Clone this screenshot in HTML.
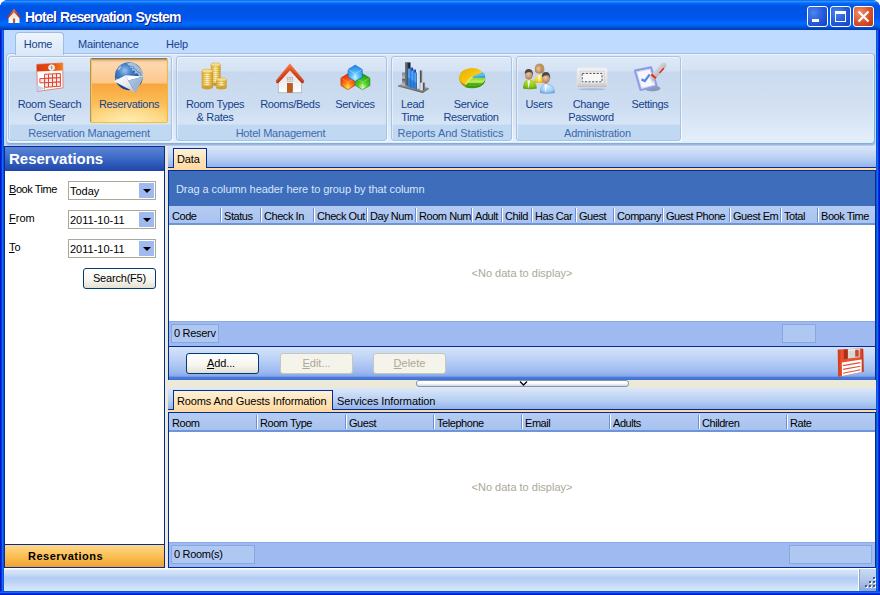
<!DOCTYPE html>
<html>
<head>
<meta charset="utf-8">
<title>Hotel Reservation System</title>
<style>
*{box-sizing:border-box;margin:0;padding:0}
html,body{width:880px;height:595px;overflow:hidden;background:#fff}
body{font-family:"Liberation Sans",sans-serif;font-size:11px;color:#000;position:relative}
.a{position:absolute;white-space:nowrap}
u{text-decoration:underline}
#win{position:absolute;left:0;top:0;width:880px;height:595px;background:linear-gradient(90deg,#0019CF 0,#0019CF 1px,#0831D9 1px,#0831D9 2px,#166AEE 2px,#166AEE 3px,#0855DD 3px,#0855DD 877px,#166AEE 877px,#166AEE 878px,#0831D9 878px,#0831D9 879px,#0019CF 879px);border-radius:8px 8px 0 0;overflow:hidden}
#title{position:absolute;left:0;top:0;width:880px;height:30px;
background:linear-gradient(#0058EE 0%,#3593FF 4%,#288EFF 6%,#127DFF 8%,#036FFC 10%,#0262EE 14%,#0057E5 20%,#0054E3 24%,#0055EB 56%,#005BF5 66%,#026AFE 76%,#0062EF 86%,#0052D6 90%,#0046C6 95%,#0038B4 100%)}
#title .txt{left:25px;top:9px;font-weight:bold;font-size:14px;line-height:16px;color:#fff;text-shadow:1px 1px 0 #0A1883;letter-spacing:-.8px;word-spacing:1px}
.cb{position:absolute;top:6px;width:21px;height:21px;border:1px solid #fff;border-radius:3px;background:radial-gradient(circle at 30% 30%,#4A86F0 0%,#2458D8 55%,#1840C0 100%)}
#client{position:absolute;left:4px;top:30px;width:872px;height:561px;background:#BFDBFF}
/* ribbon */
.rtab{z-index:3;top:3px;height:22px;line-height:22px;font-size:11px;color:#15428B;text-align:center;letter-spacing:-.2px}
#hometab{z-index:2;left:11px;top:2px;width:49px;height:23px;border:1px solid #9DBCE6;border-bottom:none;border-radius:4px 4px 0 0;background:linear-gradient(#EDF4FD,#DBE8F8)}
#ribbon{left:2px;top:23px;width:869px;height:91px;border:1px solid #8DA9D8;border-top-color:#A4C0E6;border-left-color:#A4C0E6;border-radius:4px;background:linear-gradient(#DDE8F6 0,#D5E2F3 16px,#CBDBEF 17px,#D2E0F2 51px,#E5EFFB 89px);box-shadow:inset -1px -1px 0 #D4F4FC,inset 1px 1px 0 #EAF2FB,0 1px 0 #9DB6E0,0 2px 0 #B4CAEE}
.grp{top:2px;height:85px;border:1px solid #A9C3E4;border-radius:3px;background:linear-gradient(#DEE9F8 0,#D4E2F4 14px,#C7D8EE 15px,#CDDDF1 50px,#D6E5F6 67px,#C1D8F2 68px,#C1D8F2 85px);box-shadow:1px 1px 0 rgba(255,255,255,.6),inset 1px 1px 0 rgba(255,255,255,.45)}
.glab{left:0;right:0;bottom:0;height:15px;line-height:16px;text-align:center;color:#3E6AAA;font-size:11px;letter-spacing:-.2px;padding-right:2px}
.btn{top:1px;height:65px;text-align:center;color:#15428B;line-height:13px;font-size:11px;letter-spacing:-.33px}
.btn .t{left:-20px;right:-20px;top:40px;text-align:center;white-space:pre}
.btn.sel .t{top:39px}
.btn.sel{border:1px solid;border-color:#8B7654 #F2B840 #F8C030 #A8946C;border-radius:2px;background:radial-gradient(ellipse 60% 40% at 50% 100%,rgba(255,240,180,.9),rgba(255,240,180,0)),linear-gradient(#FBCB98 0,#FDD8AE 5px,#FCC78C 24px,#F9A53C 25px,#FBBF58 45px,#FDD680 63px);box-shadow:inset 1px 0 0 #F8C850,inset 0 2px 2px -1px rgba(110,80,30,.55)}
/* left panel */
#left{left:0;top:116px;width:161px;height:422px;border:1px solid #002D96;background:#fff}
#lhead{left:0;top:0;width:159px;height:24px;background:linear-gradient(#5B85D6 0,#3A68C4 50%,#1F45A8 100%);color:#fff;font-weight:bold;font-size:15px;line-height:24px;padding-left:4px}
.combo{left:63px;width:88px;height:19px;border:1px solid #ACA899;background:#fff;line-height:19px;padding-left:1px;font-size:11px}
.combo i{position:absolute;right:1px;top:1px;width:15px;height:15px;background:#9EBAF0}
.combo i:after{content:"";position:absolute;left:4px;top:6px;border:4px solid transparent;border-top:4px solid #000;border-bottom:none}
.xpbtn{height:21px;border:1px solid #003C74;border-radius:3px;background:linear-gradient(#fff 0,#F6F5EE 60%,#E3E0D2 100%);text-align:center;line-height:19px;font-size:11px}
.xpbtn.dis{border-color:#C9C7BA;background:#F5F4EA;color:#ACA899}
#navbtn{left:0;top:397px;width:159px;height:23px;border-top:1px solid #002D96;background:linear-gradient(#FFD88A 0,#FBBF55 50%,#EFA22F 100%);font-weight:bold;text-align:left;padding-left:23px;line-height:22px;font-size:11px;letter-spacing:.5px}
/* right */
#split{left:161px;top:116px;width:3px;height:422px;background:#ECE9D8}
#right{left:164px;top:116px;width:708px;height:422px;background:#ECE9D8}
.tabstrip{left:0;width:708px;background:linear-gradient(#DCE8FA 0,#B5CDF3 60%,#8FB0EA 100%)}
.tab{border:1px solid #002D96;border-bottom:none;background:linear-gradient(#FFF1D6,#FFD9A0);line-height:21px;text-align:left;padding-left:3px;font-size:11px;letter-spacing:-.12px}
.hdr{background:linear-gradient(#B4CCF2,#A9C3EF);border-bottom:2px solid #6E94DC}
.hdr span{position:absolute;top:0;height:17px;line-height:20px;padding-left:3px;font-size:11px;overflow:hidden;white-space:nowrap;letter-spacing:-.45px}
.hdr span.s{margin-left:-1px;padding-left:4px;background:linear-gradient(#6A8FD8,#6A8FD8) 0 2px/1px 14px no-repeat,linear-gradient(#fff,#fff) 1px 2px/1px 14px no-repeat}
.foot{background:#9EBAF0;border-top:1px solid #8AA9E6}
.fcell{border:1px solid #8AA6E0;background:#AFC8F2;line-height:17px;padding-left:2px;font-size:11px;letter-spacing:-.3px}
.nodata{color:#ACA899;font-size:11px;text-align:center;left:0;right:0}
#status{left:0;top:538px;width:872px;height:23px;background:linear-gradient(#fff 0,#fff 1px,#D7E5FA 2px,#CBDDF8 6px,#B1CCF5 10px,#BCD3F6 14px,#CDDEF9 18px,#D9E7FB 23px)}
</style>
</head>
<body>
<div id="win">
  <div id="title"><div class="a txt">Hotel Reservation System</div>
    <div class="cb" style="left:807px"><div class="a" style="left:4px;top:12px;width:7px;height:3px;background:#fff"></div></div>
    <div class="cb" style="left:830px"><div class="a" style="left:4px;top:4px;width:11px;height:11px;border:1px solid #fff;border-top-width:3px"></div></div>
    <div class="cb" style="left:853px;background:radial-gradient(circle at 30% 30%,#F0906A 0%,#D8502A 55%,#B83010 100%)"><svg class="a" style="left:3px;top:3px" width="13" height="13" viewBox="0 0 13 13"><path d="M1.5 1.5L11.5 11.5M11.5 1.5L1.5 11.5" stroke="#fff" stroke-width="2.2"/></svg></div>
  </div>
  <div id="client">
    <!-- ribbon tabs -->
    <div class="a" id="hometab"></div>
    <div class="a rtab" style="left:10px;width:48px">Home</div>
    <div class="a rtab" style="left:74px">Maintenance</div>
    <div class="a rtab" style="left:162px">Help</div>
    <div class="a" id="ribbon">
      <div class="a grp" style="left:1px;width:164px">
        <div class="a btn" style="left:2px;width:77px"><div class="a t">Room Search
Center</div></div>
        <div class="a btn sel" style="left:81px;top:1px;width:78px;height:65px"><div class="a t">Reservations</div></div>
        <div class="a glab">Reservation Management</div>
      </div>
      <div class="a grp" style="left:169px;width:211px">
        <div class="a btn" style="left:3px;width:70px"><div class="a t">Room Types
&amp; Rates</div></div>
        <div class="a btn" style="left:78px;width:70px"><div class="a t">Rooms/Beds</div></div>
        <div class="a btn" style="left:152px;width:52px"><div class="a t">Services</div></div>
        <div class="a glab">Hotel Management</div>
      </div>
      <div class="a grp" style="left:384px;width:121px">
        <div class="a btn" style="left:3px;width:35px"><div class="a t">Lead
Time</div></div>
        <div class="a btn" style="left:44px;width:70px"><div class="a t">Service
Reservation</div></div>
        <div class="a glab" style="letter-spacing:-.08px">Reports And Statistics</div>
      </div>
      <div class="a grp" style="left:509px;width:165px">
        <div class="a btn" style="left:2px;width:40px"><div class="a t">Users</div></div>
        <div class="a btn" style="left:48px;width:52px"><div class="a t">Change
Password</div></div>
        <div class="a btn" style="left:108px;width:50px"><div class="a t">Settings</div></div>
        <div class="a glab">Administration</div>
      </div>
    </div>
    <!-- left panel -->
    <div class="a" id="left">
      <div class="a" id="lhead">Reservations</div>
      <div class="a" style="left:4px;top:36px;line-height:13px;letter-spacing:-.45px"><u>B</u>ook Time</div>
      <div class="a combo" style="top:34px">Today<i></i></div>
      <div class="a" style="left:4px;top:65px;line-height:13px"><u>F</u>rom</div>
      <div class="a combo" style="top:63px">2011-10-11<i></i></div>
      <div class="a" style="left:4px;top:94px;line-height:13px"><u>T</u>o</div>
      <div class="a combo" style="top:92px">2011-10-11<i></i></div>
      <div class="a xpbtn" style="left:78px;top:121px;width:73px;height:21px;line-height:19px;letter-spacing:-.2px">Search(F5)</div>
      <div class="a" id="navbtn">Reservations</div>
    </div>
    <div class="a" id="split"></div>
    <!-- right panel -->
    <div class="a" id="right">
      <!-- top tab strip -->
      <div class="a tabstrip" style="top:0;height:22px"></div>
      <div class="a" style="left:0;top:21px;width:708px;height:1px;background:#002D96"></div>
      <div class="a tab" style="left:5px;top:2px;width:34px;height:21px">Data</div>
      <div class="a" style="left:0;top:22px;width:708px;height:2px;background:#FFD9A0"></div>
      <!-- grid 1 -->
      <div class="a" style="left:0;top:24px;width:708px;height:177px;border:1px solid #002D96;background:#fff">
        <div class="a" style="left:0;top:0;width:706px;height:35px;background:#3D6DBB;color:#D9E6FA;line-height:37px;padding-left:7px;font-size:11px;letter-spacing:-.07px">Drag a column header here to group by that column</div>
        <div class="a hdr" style="left:0;top:35px;width:706px;height:19px">
          <span style="left:0;width:52px">Code</span>
          <span class="s" style="left:52px;width:41px">Status</span>
          <span class="s" style="left:92px;width:54px">Check In</span>
          <span class="s" style="left:145px;width:54px">Check Out</span>
          <span class="s" style="left:198px;width:50px">Day Num</span>
          <span class="s" style="left:247px;width:57px">Room Num</span>
          <span class="s" style="left:303px;width:31px">Adult</span>
          <span class="s" style="left:333px;width:31px">Child</span>
          <span class="s" style="left:363px;width:45px">Has Car</span>
          <span class="s" style="left:407px;width:39px">Guest</span>
          <span class="s" style="left:445px;width:50px">Company</span>
          <span class="s" style="left:494px;width:68px">Guest Phone</span>
          <span class="s" style="left:561px;width:52px">Guest Em</span>
          <span class="s" style="left:612px;width:38px">Total</span>
          <span class="s" style="left:649px;width:58px">Book Time</span>
        </div>
        <div class="a nodata" style="top:96px">&lt;No data to display&gt;</div>
        <div class="a foot" style="left:0;top:150px;width:706px;height:25px">
          <div class="a fcell" style="left:2px;top:2px;width:48px;height:19px">0 Reserv</div>
          <div class="a fcell" style="left:613px;top:2px;width:34px;height:19px"></div>
        </div>
      </div>
      <!-- button bar -->
      <div class="a" style="left:0;top:201px;width:708px;height:33px;border-left:1px solid #002D96;border-right:1px solid #002D96;background:linear-gradient(#D6E4FA 0,#B9CFF5 40%,#9DBAF0 75%,#86A8EA 88%,#4D7BD8 92%,#3F6FD3 100%)">
        <div class="a xpbtn" style="left:17px;top:6px;width:73px;padding-right:3px;letter-spacing:-.1px"><u>A</u>dd...</div>
        <div class="a xpbtn dis" style="left:111px;top:6px;width:73px"><u>E</u>dit...</div>
        <div class="a xpbtn dis" style="left:204px;top:6px;width:73px"><u>D</u>elete</div>
        <div class="a" id="i-floppy" style="left:668px;top:1px;width:29px;height:30px"></div>
      </div>
      <!-- splitter grip -->
      <div class="a" style="left:248px;top:234px;width:213px;height:7px;border:1px solid #8494B4;border-radius:3px;background:linear-gradient(#fff 0,#fff 40%,#C8D8F0 100%)"></div>
      <svg class="a" style="left:351px;top:235px" width="9" height="5" viewBox="0 0 9 5"><path d="M1 .5L4.5 4L8 .5" fill="none" stroke="#000" stroke-width="1.3"/></svg>
      <!-- bottom tab strip -->
      <div class="a tabstrip" style="top:242px;height:22px"></div>
      <div class="a" style="left:0;top:263px;width:708px;height:1px;background:#002D96"></div>
      <div class="a tab" style="left:5px;top:244px;width:160px;height:21px">Rooms And Guests Information</div>
      <div class="a" style="left:169px;top:246px;line-height:19px;height:19px;letter-spacing:-.1px">Services Information</div>
      <div class="a" style="left:0;top:264px;width:708px;height:2px;background:#FFD9A0"></div>
      <!-- grid 2 -->
      <div class="a" style="left:0;top:266px;width:708px;height:156px;border:1px solid #002D96;background:#fff">
        <div class="a hdr" style="left:0;top:0;width:706px;height:19px">
          <span style="left:0;width:87px">Room</span>
          <span class="s" style="left:88px;width:89px">Room Type</span>
          <span class="s" style="left:177px;width:88px">Guest</span>
          <span class="s" style="left:265px;width:88px">Telephone</span>
          <span class="s" style="left:353px;width:89px">Email</span>
          <span class="s" style="left:441px;width:89px">Adults</span>
          <span class="s" style="left:530px;width:88px">Children</span>
          <span class="s" style="left:618px;width:89px">Rate</span>
        </div>
        <div class="a nodata" style="top:68px">&lt;No data to display&gt;</div>
        <div class="a foot" style="left:0;top:129px;width:706px;height:25px">
          <div class="a fcell" style="left:2px;top:2px;width:84px;height:19px">0 Room(s)</div>
          <div class="a fcell" style="left:620px;top:2px;width:83px;height:19px"></div>
        </div>
      </div>
    </div>
    <!-- status bar -->
    <div class="a" id="status">
      <div class="a" style="left:854px;top:1px;width:1px;height:22px;background:#fff"></div>
      <div class="a" style="left:855px;top:1px;width:17px;height:22px;border-left:1px solid #8FA5CE;background:linear-gradient(#C9DAF6 0,#B4C9EC 45%,#8FA8D4 100%)"></div>
      <svg class="a" style="left:860px;top:8px" width="12" height="12" viewBox="0 0 12 12"><g fill="#fff"><rect x="10" y="2" width="2" height="2"/><rect x="6" y="6" width="2" height="2"/><rect x="10" y="6" width="2" height="2"/><rect x="2" y="10" width="2" height="2"/><rect x="6" y="10" width="2" height="2"/><rect x="10" y="10" width="2" height="2"/></g><g fill="#44588E"><rect x="9" y="1" width="2" height="2"/><rect x="5" y="5" width="2" height="2"/><rect x="9" y="5" width="2" height="2"/><rect x="1" y="9" width="2" height="2"/><rect x="5" y="9" width="2" height="2"/><rect x="9" y="9" width="2" height="2"/></g></svg>
    </div>
  </div>
<div class="a" style="left:0;top:591px;width:880px;height:4px;background:linear-gradient(#0855DD 0,#0855DD 1px,#166AEE 1px,#166AEE 2px,#0831D9 2px,#0831D9 3px,#0019CF 3px)"></div>
<!-- ICONS -->
<svg class="a" id="icons" style="left:0;top:0;pointer-events:none" width="880" height="595" viewBox="0 0 880 595">
<defs>
<linearGradient id="gRoof" x1="0" y1="0" x2="0" y2="1"><stop offset="0" stop-color="#F4793A"/><stop offset=".5" stop-color="#D9401A"/><stop offset="1" stop-color="#B02A10"/></linearGradient>
<linearGradient id="gWall" x1="0" y1="0" x2="0" y2="1"><stop offset="0" stop-color="#DCDCDC"/><stop offset=".7" stop-color="#F4F4F4"/><stop offset="1" stop-color="#FFFFFF"/></linearGradient>
<linearGradient id="gCalTop" x1="0" y1="0" x2="1" y2="0"><stop offset="0" stop-color="#D83A14"/><stop offset=".6" stop-color="#E84A12"/><stop offset="1" stop-color="#F08018"/></linearGradient>
<radialGradient id="gGlobe" cx=".35" cy=".3" r=".75"><stop offset="0" stop-color="#9CC4EC"/><stop offset=".3" stop-color="#4480C8"/><stop offset=".7" stop-color="#1F549C"/><stop offset="1" stop-color="#123470"/></radialGradient>
<linearGradient id="gEnvL" x1="0" y1="0" x2="1" y2="1"><stop offset="0" stop-color="#FFFFFF"/><stop offset=".6" stop-color="#E4E8EE"/><stop offset="1" stop-color="#A8B4C4"/></linearGradient>
<linearGradient id="gEnvR" x1="0" y1="0" x2="1" y2="1"><stop offset="0" stop-color="#B4CAE2"/><stop offset="1" stop-color="#86A6C8"/></linearGradient>
<linearGradient id="gCoin" x1="0" y1="0" x2="1" y2="0"><stop offset="0" stop-color="#D0A436"/><stop offset=".25" stop-color="#F0D070"/><stop offset=".5" stop-color="#FFF8C8"/><stop offset=".75" stop-color="#ECC658"/><stop offset="1" stop-color="#C49830"/></linearGradient>
<pattern id="pCoin" x="0" y="0" width="4" height="2" patternUnits="userSpaceOnUse"><rect x="0" y="1.2" width="4" height=".8" fill="#C8962C" opacity=".5"/></pattern>
<radialGradient id="gBlue" cx=".5" cy=".75" r=".8"><stop offset="0" stop-color="#C8F4FF"/><stop offset=".35" stop-color="#58C0FC"/><stop offset="1" stop-color="#1878E8"/></radialGradient>
<radialGradient id="gRed" cx=".5" cy=".85" r=".8"><stop offset="0" stop-color="#FFE030"/><stop offset=".4" stop-color="#FC7C10"/><stop offset="1" stop-color="#F02808"/></radialGradient>
<radialGradient id="gGreen" cx=".5" cy=".85" r=".8"><stop offset="0" stop-color="#D0FFB0"/><stop offset=".4" stop-color="#58D028"/><stop offset="1" stop-color="#18A008"/></radialGradient>
<linearGradient id="gBarB" x1="0" y1="0" x2="0" y2="1"><stop offset="0" stop-color="#2E86E8"/><stop offset=".5" stop-color="#5AA8F4"/><stop offset=".55" stop-color="#2C78D4"/><stop offset="1" stop-color="#3C90E4"/></linearGradient>
<linearGradient id="gBarBh" x1="0" y1="0" x2="1" y2="0"><stop offset="0" stop-color="#2470D0"/><stop offset=".3" stop-color="#64B4FC"/><stop offset=".7" stop-color="#3C90EC"/><stop offset="1" stop-color="#1C5CC0"/></linearGradient>
<linearGradient id="gBarG" x1="0" y1="0" x2="0" y2="1"><stop offset="0" stop-color="#7C848C"/><stop offset=".45" stop-color="#B4BAC0"/><stop offset=".5" stop-color="#50585E"/><stop offset="1" stop-color="#C8CCD0"/></linearGradient>
<linearGradient id="gBarD" x1="0" y1="0" x2="1" y2="0"><stop offset="0" stop-color="#68727C"/><stop offset=".5" stop-color="#2C343C"/><stop offset="1" stop-color="#10161C"/></linearGradient>
<linearGradient id="gBarS" x1="0" y1="0" x2="1" y2="0"><stop offset="0" stop-color="#F4F6F8"/><stop offset=".5" stop-color="#C4CAD0"/><stop offset=".6" stop-color="#40484E"/><stop offset="1" stop-color="#8C949C"/></linearGradient>
<linearGradient id="gPieY" x1="0" y1="0" x2="1" y2="1"><stop offset="0" stop-color="#E8A808"/><stop offset=".6" stop-color="#F8CC10"/><stop offset="1" stop-color="#FFF020"/></linearGradient>
<linearGradient id="gPieG" x1="0" y1="0" x2="0" y2="1"><stop offset="0" stop-color="#88D818"/><stop offset=".55" stop-color="#C4F070"/><stop offset=".7" stop-color="#58B808"/><stop offset="1" stop-color="#3C9808"/></linearGradient>
<radialGradient id="gSkin" cx=".45" cy=".4" r=".7"><stop offset="0" stop-color="#F0C4A0"/><stop offset=".6" stop-color="#C89470"/><stop offset="1" stop-color="#8C5C40"/></radialGradient>
<radialGradient id="gBodyG" cx=".5" cy=".3" r=".8"><stop offset="0" stop-color="#B8E030"/><stop offset=".6" stop-color="#88C418"/><stop offset="1" stop-color="#4C9008"/></radialGradient>
<radialGradient id="gBodyB" cx=".5" cy=".3" r=".8"><stop offset="0" stop-color="#D0ECFF"/><stop offset=".6" stop-color="#A0D0FC"/><stop offset="1" stop-color="#6898D8"/></radialGradient>
<radialGradient id="gBodyY" cx=".5" cy=".3" r=".8"><stop offset="0" stop-color="#FFF060"/><stop offset=".6" stop-color="#FCD418"/><stop offset="1" stop-color="#D8A008"/></radialGradient>
<linearGradient id="gPwd" x1="0" y1="0" x2="0" y2="1"><stop offset="0" stop-color="#F4F4F4"/><stop offset=".8" stop-color="#DCDCDC"/><stop offset="1" stop-color="#B8B8B8"/></linearGradient>
<linearGradient id="gPen" x1="0" y1="0" x2="1" y2="1"><stop offset="0" stop-color="#F8F8F8"/><stop offset=".5" stop-color="#C8C8C8"/><stop offset="1" stop-color="#707070"/></linearGradient>
<linearGradient id="gFlop" x1="0" y1="0" x2="1" y2="0"><stop offset="0" stop-color="#C83818"/><stop offset=".15" stop-color="#E85030"/><stop offset=".85" stop-color="#E85030"/><stop offset="1" stop-color="#C03010"/></linearGradient>
</defs>

<!-- title house -->
<g>
<path d="M8.5 17.5 L14 11.5 L19.5 17.5 L19.5 23 L8.5 23Z" fill="url(#gWall)"/>
<rect x="12.9" y="18.5" width="2.2" height="4.5" fill="#C85A18"/>
<path d="M13.9 8.8 L21 17.6 L19.8 18.6 L13.9 12 L8 18.6 L6.8 17.6Z" fill="url(#gRoof)"/>
</g>

<!-- calendar -->
<g>
<path d="M36.8 64.4 L62.7 63 L63 87.8 L37.4 91.4Z" fill="#fff" stroke="#D8442A" stroke-width=".6"/>
<path d="M36.8 64.4 L62.7 63 L62.7 70.4 L36.9 71.6Z" fill="url(#gCalTop)"/>
<path d="M37.2 85 L44.8 88.4 L37.4 91Z" fill="#BCD8F4"/><path d="M44.4 86.2v3.4" stroke="#9C9C9C" stroke-width=".8"/>
<ellipse cx="51.6" cy="67.6" rx="3" ry="2.8" fill="#E8E8E8" stroke="#fff" stroke-width=".8"/>
<ellipse cx="51.6" cy="67.6" rx=".8" ry="2" fill="#9C9C9C"/>
<g fill="#FFECE8" stroke="#E04434" stroke-width="1">
<path d="M44.6 74.2h3.9v4.2h-3.9zM48.5 74h4v4.2h-4zM52.5 73.8h4v4.2h-4zM56.5 73.6h3.9v4.2h-3.9z"/>
<path d="M39.9 78.6h4.7v4.2h-4.7zM44.6 78.4h3.9v4.3h-3.9zM48.5 78.2h4v4.3h-4zM52.5 78h4v4.3h-4zM56.5 77.8h3.9v4.3h-3.9z"/>
<path d="M44.6 82.7h3.9v4.5h-3.9zM48.5 82.5h4v4.4h-4zM52.5 82.3h4v4.3h-4zM56.5 82.1h3.9v4.2h-3.9z"/>
</g>
</g>

<!-- globe + envelope -->
<g>
<circle cx="128.9" cy="76.2" r="14" fill="url(#gGlobe)"/>
<path d="M127 63.4 q4 -1.6 8 .4 q5 3 7 7 q2 4 .7 8 l-2 -3 l-1.4 1 l-2 -3.5 l-3 .5 l1 -3 l-4 -.5 l1.5 -2 l-3.5 -1 l2 -1.4 l-3 -.6z" fill="#DCE4EC" opacity=".7"/><path d="M131 66 l3 1 l-1 1.6 l3 .6 l1 2.4 l3 1 l1 3" stroke="#3C7CC4" stroke-width="1" fill="none" opacity=".6"/>
<path d="M117.5 69 q2 -3 4 -3.5 l-1 3 l-2 2z M116 78 l2 1 l0 2 l-1.5 0z" fill="#D8E0EA" opacity=".7"/>
<path d="M125.5 75.2 L143.9 76.4 L128.2 80.4Z" fill="#FFFFFF"/>
<path d="M114 81.2 L125.5 75.2 L128.2 80.4 L135.6 92.8Z" fill="url(#gEnvL)"/>
<path d="M128.2 80.4 L143.9 76.4 L135.6 92.8Z" fill="url(#gEnvR)"/>
</g>

<!-- coins -->
<g>
<rect x="210.8" y="64.6" width="9.8" height="19.6" fill="url(#gCoin)"/><rect x="210.8" y="64.6" width="9.8" height="19.6" fill="url(#pCoin)"/>
<ellipse cx="215.7" cy="84.2" rx="4.9" ry="1.6" fill="#C8982C"/>
<ellipse cx="215.7" cy="64.6" rx="4.9" ry="1.7" fill="#F8E080" stroke="#D0A030" stroke-width=".5"/>
<rect x="201.7" y="71" width="11.2" height="16.6" fill="url(#gCoin)"/><rect x="201.7" y="71" width="11.2" height="16.6" fill="url(#pCoin)"/>
<ellipse cx="207.3" cy="87.6" rx="5.6" ry="1.8" fill="#D0A030"/>
<ellipse cx="207.3" cy="71" rx="5.6" ry="1.8" fill="#F8E080" stroke="#D0A030" stroke-width=".5"/>
<rect x="216.2" y="79.6" width="10.4" height="8.2" fill="url(#gCoin)"/><rect x="216.2" y="79.6" width="10.4" height="8.2" fill="url(#pCoin)"/>
<ellipse cx="221.4" cy="87.8" rx="5.2" ry="1.7" fill="#D0A030"/>
<ellipse cx="221.4" cy="79.6" rx="5.2" ry="1.7" fill="#F8E080" stroke="#D0A030" stroke-width=".5"/>
</g>

<!-- house -->
<g>
<path d="M278.4 82 L289.9 69 L301.6 82 L301.6 92.6 L278.4 92.6Z" fill="url(#gWall)" stroke="#8C9098" stroke-width=".5"/>
<rect x="287.2" y="77.2" width="5.6" height="4" fill="#E8E8E8" stroke="#A0A0A0" stroke-width=".5"/>
<path d="M290 77.2v4M287.2 79.2h5.6" stroke="#A0A0A0" stroke-width=".5"/>
<rect x="287.2" y="83.2" width="5.4" height="9.2" fill="#C05A18" stroke="#8C3C0C" stroke-width=".4"/>
<path d="M289.9 63.4 L304.2 80.8 L303.6 83 L301.8 83.2 L289.9 70.6 L278.2 83.2 L276.4 83 L275.8 80.8Z" fill="url(#gRoof)"/>
<path d="M289.9 63.4 L304.2 80.8 L303.6 83 L289.9 66.4 L276.4 83 L275.8 80.8Z" fill="#F88850" opacity=".35"/>
</g>

<!-- cubes -->
<g stroke-width=".5">
<path d="M347.8 73.8 L354.9 78.1 L354.9 85.6 L347.8 89.7 L340.9 85.6 L340.9 78Z" fill="url(#gRed)" stroke="#A02808"/>
<path d="M340.9 78 L347.9 82.2 L354.9 78.1 M347.9 82.2 L347.8 89.7" stroke="#FFD0A0" fill="none" opacity=".7"/>
<path d="M362.6 73.8 L369.9 78 L369.9 85.6 L362.6 89.7 L355.5 85.6 L355.5 78.1Z" fill="url(#gGreen)" stroke="#107008"/>
<path d="M355.5 78.1 L362.6 82.2 L369.9 78 M362.6 82.2 L362.6 89.7" stroke="#D0FFC0" fill="none" opacity=".7"/>
<path d="M355.2 65.1 L362.3 69.4 L362.3 77.2 L355.2 81.3 L348.1 77.2 L348.1 69.4Z" fill="url(#gBlue)" stroke="#1058B8"/>
<path d="M348.1 69.4 L355.2 73.8 L362.3 69.4 M355.2 73.8 L355.2 81.3" stroke="#E0F8FF" fill="none" opacity=".8"/>
</g>

<!-- bars -->
<g>
<path d="M398 85.4 L404 83.6 L428.8 88 L422.8 93Z" fill="#8C8C88"/>
<path d="M398 85.4 L422.8 91.6 L428.8 88 L428.8 89 L422.8 93 L398 86.4Z" fill="#6C6C68"/>
<rect x="402.1" y="72.5" width="5.4" height="13" fill="url(#gBarG)"/>
<rect x="405.1" y="62.4" width="5.4" height="23" fill="url(#gBarD)"/>
<rect x="405.1" y="62.4" width="2.6" height="23" fill="#6C747C" opacity=".6"/>
<rect x="417.2" y="70.4" width="5" height="18.4" fill="url(#gBarS)"/>
<rect x="420.3" y="82.6" width="4.8" height="7.6" fill="url(#gBarS)"/>
<path d="M407.8 68.4 L411.2 68.4 L411.2 87.6 L407.8 87.2Z" fill="url(#gBarBh)"/>
<path d="M411.2 68.4 L412.9 67.4 L412.9 71 L411.2 71Z" fill="#0C2C88"/>
<path d="M407.8 68.4 L409.4 67.4 L412.9 67.4 L411.2 68.4Z" fill="#1C50B8"/>
<path d="M411 70.4 L414.3 70.4 L414.3 88.4 L411 88Z" fill="url(#gBarBh)"/>
<path d="M414.3 70.4 L415.9 69.4 L415.9 73 L414.3 73Z" fill="#0C2C88"/>
<path d="M411 70.4 L412.6 69.4 L415.9 69.4 L414.3 70.4Z" fill="#1C50B8"/>
<path d="M414 72.4 L417 72.4 L417 89.4 L414 88.8Z" fill="url(#gBarBh)"/>
<path d="M407.8 78 L411.2 79 L411.2 87.6 L407.8 87.2Z M411 80 L414.3 81 L414.3 88.4 L411 88Z M414 82 L417 83 L417 89.4 L414 88.8Z" fill="#1458B8" opacity=".45"/>
</g>

<!-- pie -->
<g>
<path d="M465.2 84.6 Q472 87 480 84.4 Q485.2 82 485.2 77.6 L485.2 80.6 Q484.8 84.6 479.6 87 Q472 89.6 465.2 87.2Z" fill="#3C9A08"/>
<path d="M465.2 84.6 L471.4 78.2 L485.2 77.8 Q485.2 82 480 84.4 Q472 87 465.2 84.6Z" fill="url(#gPieG)"/>
<path d="M472.4 76.6 L482.4 72.4 Q485.4 74 485.2 77.8 L472.4 77.8Z" fill="#2C98D4"/>
<path d="M472.4 76.4 L482.4 72.2 Q484.8 73.4 485.2 75.8 L472.4 77Z" fill="#58C0F0"/>
<path d="M458.9 76 Q458.4 82.6 464.8 86.8 L466 84 Q460 81 458.9 76Z" fill="#C08404"/>
<path d="M465.2 84.6 Q458.6 81.4 459 76.4 Q460.6 69 471 67.9 Q479 67.6 482.4 72.2 L472.4 76.4 Q468 79 465.2 84.6Z" fill="url(#gPieY)"/>
<path d="M472.4 76.4 Q468 79 465.2 84.6 L466.4 85 Q469 80 473.4 77Z" fill="#FFF040" opacity=".8"/>
</g>

<!-- users -->
<g>
<path d="M534.2 82.8 Q534 76 539.2 74.4 Q544.4 76 544.2 82.8Z" fill="url(#gBodyY)"/>
<path d="M538 75.4 L539.2 82.8 L540.6 75.4Z" fill="#F4F4F4"/>
<path d="M534.8 69.4 Q534.6 63.4 539.6 63.4 Q544.8 63.8 544.4 70 Q544.4 73 542.6 73.6 L536 72.6 Q534.8 71.6 534.8 69.4Z" fill="#B89850"/>
<ellipse cx="538.8" cy="69.6" rx="3.4" ry="4" fill="url(#gSkin)"/>
<path d="M523 88.4 Q522.8 80.8 528.8 79.4 Q537 80.8 536.8 88.4 Q530 90 523 88.4Z" fill="url(#gBodyG)"/>
<path d="M527.4 80.2 L528.4 88.8 L530.2 80.2Z" fill="#F4F4F4"/>
<ellipse cx="528.8" cy="75" rx="3.9" ry="4.6" fill="url(#gSkin)"/>
<path d="M524.8 74 Q524.4 69 529 69 Q533.4 69.2 533 75.4 L531.6 72.4 Q528 71 524.8 74Z" fill="#484848"/>
<path d="M540.2 92.8 Q540 85 546 83.4 Q554.8 85 554.6 92.8 Q547 94.2 540.2 92.8Z" fill="url(#gBodyB)" stroke="#5888C8" stroke-width=".4"/>
<path d="M544.4 84.4 L545.4 93.2 L547.2 84.4Z" fill="#F8F8F8"/>
<ellipse cx="545.8" cy="78.6" rx="4" ry="4.8" fill="url(#gSkin)"/>
<path d="M541.8 77.4 Q541.6 72 546.4 72 Q550.6 72.4 550.2 79 L548.8 75.6 Q545 74.2 541.8 77.4Z" fill="#484848"/>
</g>

<!-- password -->
<g>
<ellipse cx="592" cy="89.2" rx="13.5" ry="1" fill="#8CA4C8" opacity=".6"/>
<rect x="577.1" y="67.8" width="30" height="19.8" rx="1" fill="url(#gPwd)" stroke="#E8E8E8" stroke-width=".5"/>
<rect x="580.1" y="71.1" width="24" height="12.8" fill="#F0F0F0" stroke="#C4C4C4" stroke-width=".6"/>
<rect x="582.2" y="73.4" width="19.8" height="8.4" fill="#F8F8F8" stroke="#505050" stroke-width="1" stroke-dasharray="2.2 1.4"/>
</g>

<!-- settings -->
<g>
<ellipse cx="652.5" cy="88.6" rx="8" ry="2.8" fill="#3C4C70" opacity=".45"/>
<path d="M635 70.6 L651 67.4 L656.6 85.8 L640.6 90Z" fill="#F8F8FC" stroke="#8E9CE8" stroke-width="2.2" stroke-linejoin="round"/>
<path d="M636.6 71.8 L650 69.2 L655 85 L641.6 88.4Z" fill="none" stroke="#C4CCF4" stroke-width=".8"/>
<path d="M641.4 79.4 L644.8 81 L649.8 74.4" fill="none" stroke="#5C88E8" stroke-width="2.3"/>
<path d="M650 78.6 L652.4 83.6 L654.6 82.4 L653.8 79.2Z" fill="#D8D8D8"/>
<path d="M649.4 77.2 L661 63.8 Q664 61.6 665.8 63.6 Q667 65.6 665.2 67.8 L653.4 81Z" fill="url(#gPen)"/>
<path d="M652 73.6 L656.6 77.4 L655.2 79 L650.6 75.2Z" fill="#E82C20"/>
<path d="M659 72.4 L663.4 67.6 L664.2 69 L660 73.4Z" fill="#E82C20"/>
</g>

<!-- floppy -->
<g>
<path d="M837.7 350.4 Q837.7 349.6 838.6 349.5 L862.4 348.6 Q863.3 348.6 863.3 349.5 L863.8 371.8 L838.9 376.8 Q838.2 376.8 838.2 376Z" fill="url(#gFlop)"/>
<path d="M843.8 349.6 L848 349.5 L848 358.4 L843.8 359.2Z" fill="#A83018"/>
<path d="M847.9 349.5 L859.7 349.1 L859.7 357.2 L847.9 358.4Z" fill="#D8D8D4"/>
<path d="M847.9 349.5 L859.7 349.1 L859.7 350.4 L847.9 350.8Z" fill="#F4F4F0"/>
<path d="M855.2 349.8 L858.7 349.7 L858.7 356.4 L855.2 356.8Z" fill="#C84830"/>
<path d="M841.8 362.5 L861.6 359.6 L861.6 372.1 L842.1 375.9Z" fill="#fff"/>
<path d="M843 365.6 L860.4 362.6 M843 369.4 L860.4 366.2 M843 373.2 L860.4 369.8" stroke="#E45038" stroke-width="1.1" fill="none"/>
</g>
</svg>
<!-- /ICONS -->
</div>
</body>
</html>
